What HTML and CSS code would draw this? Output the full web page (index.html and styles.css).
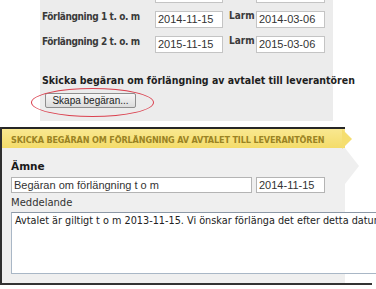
FILE: index.html
```html
<!DOCTYPE html>
<html lang="sv">
<head>
  <meta charset="UTF-8">
  <title>Förlängning av avtal</title>
  <link rel="stylesheet" href="styles.css">
</head>
<body>
  <div class="top">
    <div class="row">
      <span class="lbl"></span>
      <span class="field"></span>
      <span class="larm"></span>
      <span class="field"></span>
    </div>
    <div class="row">
      <span class="lbl">Förlängning 1 t. o. m</span>
      <span class="field">2014-11-15</span>
      <span class="larm">Larm</span>
      <span class="field">2014-03-06</span>
    </div>
    <div class="row">
      <span class="lbl">Förlängning 2 t. o. m</span>
      <span class="field">2015-11-15</span>
      <span class="larm">Larm</span>
      <span class="field">2015-03-06</span>
    </div>

    <div class="send-title">Skicka begäran om förlängning av avtalet till leverantören</div>
    <div class="btn-wrap">
      <button type="button">Skapa begäran...</button>
    </div>
  </div>

  <div class="req">
    <div class="banner">SKICKA BEGÄRAN OM FÖRLÄNGNING AV AVTALET TILL LEVERANTÖREN</div>
    <div class="req-body">
      <div class="req-label bold">Ämne</div>
      <div class="subject-row">
        <span class="field wide">Begäran om förlängning t o m</span>
        <span class="field">2014-11-15</span>
      </div>
      <div class="req-label">Meddelande</div>
      <div class="message">Avtalet är giltigt t o m 2013-11-15. Vi önskar förlänga det efter detta datum.</div>
    </div>
  </div>
  <div class="req-foot"></div>
</body>
</html>
```

FILE: styles.css
```css
* {
  box-sizing: border-box;
}

html, body {
  overflow: hidden;
}

body {
  margin: 0;
  background: #ffffff;
  font-family: 'DejaVu Sans', Verdana, sans-serif;
  color: #333;
}

.top {
  margin: -14px 0 0 40px;
  width: 293px;
  height: 135px;
  padding-left: 2px;
  background: #ececec;
}

.row {
  display: grid;
  grid-template-columns: 113px 68px 33px 69px;
  height: 25px;
}

.lbl,
.larm {
  font-family: 'DejaVu Sans Condensed', 'DejaVu Sans', sans-serif;
  font-weight: bold;
  font-size: 10px;
  line-height: 12px;
  letter-spacing: -0.4px;
  color: #3a3a3a;
}

.larm {
  padding-left: 6px;
  line-height: 10px;
  letter-spacing: 0;
}

.field {
  display: block;
  height: 17px;
  padding: 0 2px;
  background: #fff;
  border: 1px solid #c4c4c4;
  font-family: 'Liberation Sans', Arial, sans-serif;
  font-size: 11px;
  line-height: 15px;
  color: #333;
  white-space: nowrap;
  overflow: hidden;
}

.send-title {
  margin-top: 13px;
  font-family: 'DejaVu Sans Condensed', 'DejaVu Sans', sans-serif;
  font-weight: bold;
  font-size: 10.5px;
  line-height: 13px;
  color: #1e1e1e;
  white-space: nowrap;
}

.btn-wrap {
  position: relative;
  margin: 6px 0 0 3px;
  width: 91px;
}

.btn-wrap::before {
  content: "";
  position: absolute;
  left: -14px;
  top: -5px;
  width: 121px;
  height: 27px;
  border: 1px solid #db4250;
  border-radius: 50%;
}

button {
  display: block;
  width: 91px;
  height: 15px;
  padding: 0;
  background: linear-gradient(#f6f6f6, #dcdcdc);
  border: 1px solid #8e8e8e;
  border-radius: 2px;
  font-family: 'Liberation Sans', Arial, sans-serif;
  font-size: 10px;
  line-height: 13px;
  color: #222;
}

.req {
  margin-top: 6px;
  width: 345px;
  background: #efefef;
  border-left: 2px solid #2f2f2f;
}

.banner {
  position: relative;
  height: 21px;
  padding: 6px 0 0 9px;
  border-top: 2px solid #262626;
  background: linear-gradient(#f9e890, #f4dc6a);
  font-family: 'DejaVu Sans Condensed', 'DejaVu Sans', sans-serif;
  font-weight: bold;
  font-size: 9px;
  line-height: 11px;
  letter-spacing: -0.14px;
  color: #9a8324;
  white-space: nowrap;
}

.banner::after {
  content: "";
  position: absolute;
  right: -7px;
  top: 0;
  border-left: 10px solid #f5de70;
  border-top: 10px solid transparent;
  border-bottom: 10px solid transparent;
}

.req-body {
  position: relative;
  height: 135px;
  padding: 12px 0 0 9px;
}

.req-body::after {
  content: "";
  position: absolute;
  right: -14px;
  top: 0;
  border-left: 14px solid #efefef;
  border-top: 18px solid transparent;
  border-bottom: 18px solid transparent;
}

.req-label {
  font-size: 10px;
  line-height: 13px;
  color: #333;
}

.req-label.bold {
  font-weight: bold;
  font-size: 10.5px;
  color: #1a1a1a;
}

.subject-row {
  display: flex;
  gap: 4px;
  margin: 4px 0 3px;
}

.subject-row .field {
  height: 16px;
  line-height: 14px;
  border-color: #b4b4b4;
}

.subject-row .field:last-child {
  width: 69px;
}

.field.wide {
  width: 241px;
}

.message {
  position: relative;
  z-index: 1;
  margin-top: 3px;
  width: 420px;
  height: 62px;
  padding: 2px 3px;
  background: #fff;
  border: 1px solid #a9b7c6;
  border-top-color: #8c98a6;
  font-size: 9.7px;
  line-height: 12px;
  color: #222;
  white-space: nowrap;
}

.req-foot {
  width: 372px;
  height: 2px;
  background: #333;
}
```
